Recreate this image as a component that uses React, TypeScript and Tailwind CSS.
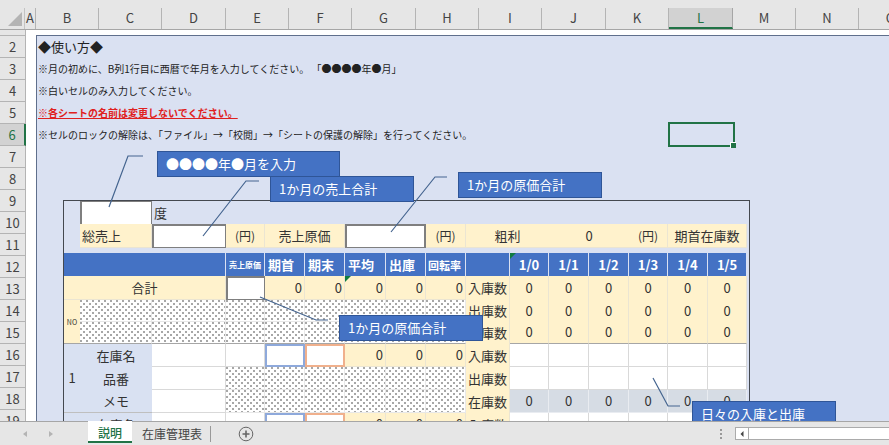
import { ChevronLeft } from "lucide-react";

const columns = [
    { name: "A", width: "w-[11px]" },
    { name: "B", width: "w-[63px]" },
    { name: "C", width: "w-[63px]" },
    { name: "D", width: "w-[64px]" },
    { name: "E", width: "w-[63px]" },
    { name: "F", width: "w-[63px]" },
    { name: "G", width: "w-[64px]" },
    { name: "H", width: "w-[63px]" },
    { name: "I", width: "w-[63px]" },
    { name: "J", width: "w-[64px]" },
    { name: "K", width: "w-[63px]" },
    { name: "L", width: "w-[64px]" },
    { name: "M", width: "w-[63px]" },
    { name: "N", width: "w-[63px]" },
    { name: "O", width: "w-[64px]" },
];

const rows = Array.from({ length: 18 }, (_, i) => i + 2);
const dates = ["1/0", "1/1", "1/2", "1/3", "1/4", "1/5"];

const yellow = "bg-[#fff2cc] border-r border-b border-[#ebe5d2]";
const label = "bg-[#fff2cc] border-r border-[#ebe5d2] text-center";
const white = "bg-white border-r border-b border-[#d9d9d9]";
const dotted =
    "border-r border-[#e8e8e8] bg-white bg-[radial-gradient(circle_at_1px_1px,#777_0.6px,transparent_0.9px),radial-gradient(circle_at_4px_4px,#777_0.6px,transparent_0.9px)] bg-[size:6px_6px]";
const head = "bg-[#4472c4] border-r border-[#dae1f2] text-white font-bold";

const Flag = () => (
    <span className="absolute top-0 left-0 border-t-[6px] border-r-[6px] border-t-[#107c41] border-r-transparent"></span>
);

const CellInput = ({ name, look }: { name: string; look: string }) => (
    <input aria-label={name} className={`block w-full bg-white px-1 outline-none ${look}`} />
);

const ColumnHeader = () => (
    <div className="flex h-[30px] shrink-0 overflow-hidden border-b border-[#a6a6a6] pt-2">
        <button aria-label="すべて選択" className="flex w-[25px] shrink-0 items-end justify-end border-r border-[#c3c3c3] pr-[2px] pb-[3px]">
            <svg width="14" height="14" viewBox="0 0 14 14">
                <path d="M14 0V14H0Z" fill="#b4b4b4" />
            </svg>
        </button>
        {columns.map((c) => (
            <div
                key={c.name}
                className={`${c.width} shrink-0 border-r text-center leading-5 ${
                    c.name === "L"
                        ? "border-b-2 border-r-[#a6a6a6] border-b-[#217346] bg-[#d2d2d2] text-[#217346]"
                        : "border-[#b4b4b4] text-[#444]"
                }`}
            >
                {c.name}
            </div>
        ))}
    </div>
);

const RowHeader = () => (
    <div className="w-[26px] shrink-0 overflow-hidden">
        <div className="h-[6px] border-r border-b border-[#b4b4b4]"></div>
        {rows.map((r) => (
            <div
                key={r}
                className={`h-[22px] border-b border-b-[#b4b4b4] text-center leading-[22px] ${
                    r === 6 ? "border-r-2 border-r-[#217346] bg-[#d2d2d2] text-[#217346]" : "border-r border-r-[#b4b4b4] text-[#444]"
                }`}
            >
                {r}
            </div>
        ))}
    </div>
);

const ItemBlock = ({ no }: { no: number }) => (
    <>
        <tr className="h-[23px]">
            <td rowSpan={3} className="border-b border-[#bfbfbf] bg-[#d9e1f2] text-center">{no}</td>
            <td className="bg-[#d9e1f2] text-center">在庫名</td>
            <td className={white}><CellInput name={`在庫名 ${no}`} look="h-[22px]" /></td>
            <td className={white}></td>
            <td><CellInput name={`期首 ${no}`} look="h-[23px] border-2 border-[#8ea9db]" /></td>
            <td><CellInput name={`期末 ${no}`} look="h-[23px] border-2 border-[#f0b08c]" /></td>
            <td className={`${yellow} pr-[2px] text-right`}>0</td>
            <td className={`${yellow} pr-[2px] text-right`}>0</td>
            <td className={`${yellow} pr-[2px] text-right`}>0</td>
            <td className={label}>入庫数</td>
            {dates.map((d) => <td key={d} className={white}></td>)}
        </tr>
        <tr className="h-[23px]">
            <td className="bg-[#d9e1f2] text-center">品番</td>
            <td className={white}><CellInput name={`品番 ${no}`} look="h-[22px]" /></td>
            {[0, 1, 2, 3, 4, 5].map((i) => <td key={i} className={`${dotted} border-b`}></td>)}
            <td className={label}>出庫数</td>
            {dates.map((d) => <td key={d} className={white}></td>)}
        </tr>
        <tr className="h-[23px]">
            <td className="border-b border-[#bfbfbf] bg-[#d9e1f2] text-center">メモ</td>
            <td className={white}><CellInput name={`メモ ${no}`} look="h-[22px]" /></td>
            {[0, 1, 2, 3, 4, 5].map((i) => <td key={i} className={`${dotted} border-b`}></td>)}
            <td className={label}>在庫数</td>
            {dates.map((d) => (
                <td key={d} className="border-r border-b border-[#e9ecf1] bg-[#d6dce4] text-center">0</td>
            ))}
        </tr>
    </>
);

const StockTable = () => (
    <div className="mt-[54px] ml-[26px] w-[687px] border border-[#44484f] pr-[2px]">
        <table className="w-full table-fixed border-separate border-spacing-0 leading-5 text-[#333]">
            <colgroup>
                <col className="w-[16px]" />
                <col className="w-[72px]" />
                <col className="w-[74px]" />
                <col className="w-[39px]" />
                <col className="w-[40px]" />
                <col className="w-[40px]" />
                <col className="w-[41px]" />
                <col className="w-[40px]" />
                <col className="w-[40px]" />
                <col className="w-[44px]" />
                <col className="w-[39px]" />
                <col className="w-[40px]" />
                <col className="w-[40px]" />
                <col className="w-[39px]" />
                <col className="w-[40px]" />
                <col className="w-[39px]" />
            </colgroup>
            <tbody>
                <tr className="h-[23px]">
                    <td></td>
                    <td><CellInput name="年月" look="h-[23px] border-l-2 border-t border-r border-[#7f7f7f]" /></td>
                    <td colSpan={14} className="pl-[2px]">度</td>
                </tr>
                <tr className="h-6">
                    <td></td>
                    <td className={`${yellow} pl-[2px]`}>総売上</td>
                    <td><CellInput name="総売上" look="h-6 border-t-2 border-l-2 border-r border-b border-[#7f7f7f]" /></td>
                    <td className={`${yellow} text-center text-xs`}>(円)</td>
                    <td colSpan={2} className={`${yellow} text-center`}>売上原価</td>
                    <td colSpan={2}><CellInput name="売上原価" look="h-6 border-t-2 border-l-2 border-r-2 border-b border-[#7f7f7f]" /></td>
                    <td className={`${yellow} text-center text-xs`}>(円)</td>
                    <td colSpan={2} className="border-b border-[#ebe5d2] bg-[#fff2cc] text-center">粗利</td>
                    <td colSpan={2} className="border-b border-[#ebe5d2] bg-[#fff2cc] text-center">0</td>
                    <td className={`${yellow} text-center text-xs`}>(円)</td>
                    <td colSpan={2} className={`${yellow} text-center`}>期首在庫数</td>
                </tr>
                <tr className="h-[5px]">
                    <td colSpan={16}></td>
                </tr>
                <tr className="h-[23px]">
                    <th colSpan={3} className={head}></th>
                    <th className={`${head} text-[8px]`}>売上原価</th>
                    <th className={`${head} pl-[3px] text-left`}>期首</th>
                    <th className={`${head} pl-[3px] text-left`}>期末</th>
                    <th className={`${head} pl-[3px] text-left`}>平均</th>
                    <th className={`${head} pl-[3px] text-left`}>出庫</th>
                    <th className={`${head} pl-[2px] text-left text-[11px]`}>回転率</th>
                    <th className={head}></th>
                    {dates.map((d, i) => (
                        <th key={d} className={`${head} relative text-center`}>
                            {i === 0 && <Flag />}
                            {d}
                        </th>
                    ))}
                </tr>
                <tr className="h-6">
                    <td colSpan={3} className={`${yellow} text-center`}>合計</td>
                    <td><CellInput name="原価合計" look="h-6 border-t-2 border-l-2 border-r border-b border-[#7f7f7f]" /></td>
                    <td className={`${yellow} pr-[2px] text-right`}>0</td>
                    <td className={`${yellow} pr-[2px] text-right`}>0</td>
                    <td className={`${yellow} relative pr-[2px] text-right`}><Flag />0</td>
                    <td className={`${yellow} pr-[2px] text-right`}>0</td>
                    <td className={`${yellow} pr-[2px] text-right`}>0</td>
                    <td className={label}>入庫数</td>
                    {dates.map((d) => <td key={d} className={label}>0</td>)}
                </tr>
                <tr className="h-[21px]">
                    <td rowSpan={2} className="border-b border-[#a6a6a6] bg-[#fff2cc] text-center text-[7px]">NO</td>
                    {[0, 1, 2, 3, 4, 5, 6, 7].map((i) => <td key={i} className={dotted}></td>)}
                    <td className={label}>出庫数</td>
                    {dates.map((d) => <td key={d} className={label}>0</td>)}
                </tr>
                <tr className="h-[23px]">
                    {[0, 1, 2, 3, 4, 5, 6, 7].map((i) => <td key={i} className={`${dotted} border-t border-b border-b-[#a6a6a6]`}></td>)}
                    <td className={label}>在庫数</td>
                    {dates.map((d) => <td key={d} className={`${label} border-b border-b-[#a6a6a6]`}>0</td>)}
                </tr>
                <ItemBlock no={1} />
                <ItemBlock no={2} />
            </tbody>
        </table>
    </div>
);

const callout = "absolute h-[26px] border border-[#2f5597] bg-[#4472c4] pl-2 leading-6 text-white";

// notes pinned over the sheet, with their leader lines
const Notes = () => (
    <>
        <svg className="pointer-events-none absolute top-0 left-0 h-full w-full" fill="none" stroke="#44648f" strokeWidth="1.2">
            <path d="M83 177L102 126H117" />
            <path d="M177 206L220 151H233" />
            <path d="M365 202L409 147H421" />
            <path d="M234 267L290 290H302" />
            <path d="M627 348L642 376H654" />
        </svg>
        <div className={`${callout} top-[121px] left-[131px] w-[183px]`}>●●●●年●月を入力</div>
        <div className={`${callout} top-[146px] left-[244px] w-[144px]`}>1か月の売上合計</div>
        <div className={`${callout} top-[142px] left-[432px] w-[144px]`}>1か月の原価合計</div>
        <div className={`${callout} top-[285px] left-[313px] w-[144px]`}>1か月の原価合計</div>
        <div className={`${callout} top-[371px] left-[666px] w-[144px]`}>日々の入庫と出庫</div>
        <div className="absolute top-[92px] left-[642px] h-[25px] w-[67px] border-2 border-[#217346]">
            <span className="absolute -right-[3px] -bottom-[3px] h-[6px] w-[6px] border-t border-l border-white bg-[#217346]"></span>
        </div>
    </>
);

const SheetTabs = () => (
    <div className="flex h-6 shrink-0 items-center border-t border-[#a6a6a6] text-xs text-[#444]">
        <button aria-label="前のシート" className="ml-[23px] border-y-[3px] border-r-[4px] border-y-transparent border-r-[#b4b4b4]"></button>
        <button aria-label="次のシート" className="ml-[22px] border-y-[3px] border-l-[4px] border-y-transparent border-l-[#b4b4b4]"></button>
        <button className="-mt-px ml-[35px] h-[22px] w-11 self-start border-b-2 border-[#217346] bg-white pt-[3px] leading-4 font-medium text-[#217346]">説明</button>
        <button className="ml-[10px] h-5 pr-2">在庫管理表</button>
        <span className="h-4 border-r border-[#999]"></span>
        <button aria-label="新しいシート" className="ml-[27px]">
            <svg width="16" height="16" viewBox="0 0 16 16" fill="none" stroke="#666">
                <circle cx="8" cy="8" r="6.8" />
                <path d="M8 4.5V11.5M4.5 8H11.5" strokeWidth="1.6" />
            </svg>
        </button>
        <svg className="ml-auto shrink-0" width="3" height="12" viewBox="0 0 3 12" fill="#999">
            <path d="M0 1h2v2H0zM0 5h2v2H0zM0 9h2v2H0z" />
        </svg>
        <div className="ml-[12px] flex h-[13px] w-[154px] border border-r-0 border-[#ababab] bg-white">
            <button aria-label="左へスクロール" className="flex w-[13px] items-center justify-center border-r border-[#ababab]">
                <ChevronLeft size={12} fill="#444" stroke="none" />
            </button>
        </div>
    </div>
);

const App = () => {
    return (
        <div className="flex h-screen flex-col overflow-hidden bg-[#e6e6e6] font-['Noto_Sans_CJK_JP',sans-serif] text-[13px]">
            <ColumnHeader />
            <div className="flex min-h-0 flex-1 overflow-hidden">
                <RowHeader />
                <main className="relative min-w-0 flex-1 overflow-hidden bg-white pt-[5px] pl-[10px]">
                    <div className="border-t border-l border-[#5f6f8c] bg-[#dae1f2] pb-10">
                        <div className="pl-px text-[10px] leading-[22px] text-[#222]">
                            <h1 className="text-[13px]">◆使い方◆</h1>
                            <p>※月の初めに、B列1行目に西暦で年月を入力してください。 「●●●●年●月」</p>
                            <p>※白いセルのみ入力してください。</p>
                            <p className="font-bold text-[#e02020] underline">※各シートの名前は変更しないでください。</p>
                            <p>※セルのロックの解除は、「ファイル」→「校閲」→「シートの保護の解除」を行ってください。</p>
                        </div>
                        <StockTable />
                    </div>
                    <Notes />
                </main>
            </div>
            <SheetTabs />
        </div>
    );
};

export default App;
